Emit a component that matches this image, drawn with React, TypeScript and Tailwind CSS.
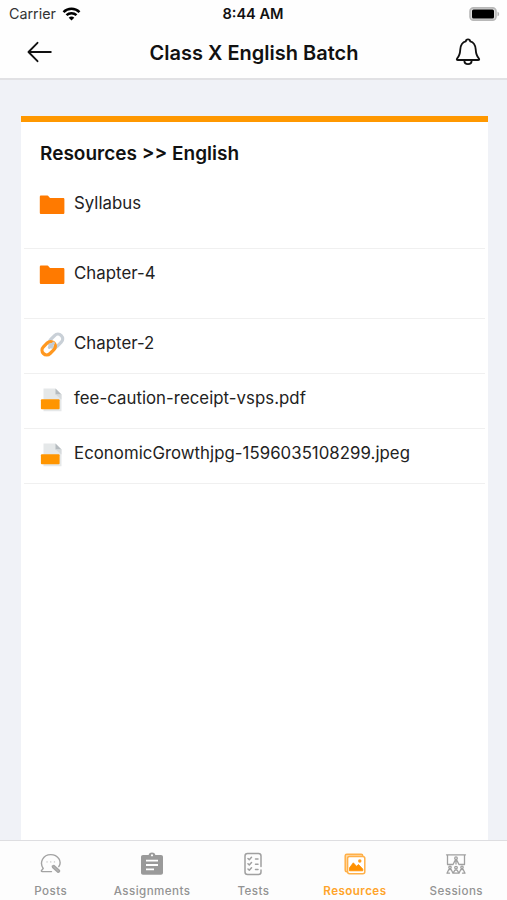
import type { ReactNode } from 'react'

type ResourceType = 'folder' | 'link' | 'file'

const resources: { name: string; type: ResourceType }[] = [
  { name: 'Syllabus', type: 'folder' },
  { name: 'Chapter-4', type: 'folder' },
  { name: 'Chapter-2', type: 'link' },
  { name: 'fee-caution-receipt-vsps.pdf', type: 'file' },
  { name: 'EconomicGrowthjpg-1596035108299.jpeg', type: 'file' },
]

function WifiIcon() {
  return (
    <svg width="19" height="14" viewBox="0 0 18 14" fill="none" stroke="#000" strokeWidth="2.5">
      <path d="M1 5.1C5.4.7 12.6.7 17 5.1" />
      <path d="M4 8.2c2.8-2.7 7.2-2.7 10 0" />
      <path d="M9 13.6 6.2 10.7c1.6-1.5 4-1.5 5.6 0z" fill="#000" stroke="none" />
    </svg>
  )
}

function BatteryIcon() {
  return (
    <svg width="31" height="14" viewBox="0 0 31 14">
      <rect x="1" y=".9" width="26" height="12.2" rx="3.4" fill="#ddd" stroke="#b8b8b8" strokeWidth="1.6" />
      <rect x="3" y="2.6" width="22" height="8.8" rx="1.5" fill="#000" />
      <path d="M28.5 4.7c2.2.7 2.2 3.9 0 4.6z" fill="#b5b5b5" />
    </svg>
  )
}

function BackIcon() {
  return (
    <svg width="26" height="22" viewBox="0 0 26 22" fill="none" stroke="#111" strokeWidth="1.9" strokeLinecap="round" strokeLinejoin="round">
      <path d="M11.5 1.8 2.5 11l9 9.2M2.8 11h22" />
    </svg>
  )
}

function BellIcon() {
  return (
    <svg width="26" height="28" viewBox="0 0 26 28" fill="none" stroke="#111" strokeWidth="1.8" strokeLinecap="round" strokeLinejoin="round">
      <path d="M10.8 3.4c.2-2.7 4.2-2.7 4.4 0 3.6.9 5.2 3.8 5.5 8 .3 5.4 1.2 7 3.1 8.9.8 1 .5 1.7-.8 1.7H3c-1.3 0-1.6-.7-.8-1.7 1.9-1.9 2.8-3.5 3.1-8.9.3-4.2 1.9-7.1 5.5-8z" />
      <path d="M9.3 22.4c.2 5 7.2 5 7.4 0" />
    </svg>
  )
}

function FolderIcon() {
  return (
    <svg width="26" height="20" viewBox="0 0 26 20" fill="#ff7a00">
      <path d="M2.2.6h6.2c.5 0 .8.2 1.100.6L11 3h13c.9 0 1.400.5 1.400 1.400v13.300c0 .9-.5 1.400-1.400 1.400H2.200c-.9 0-1.400-.5-1.400-1.400V2C.8 1.100 1.300.6 2.200.6z" />
    </svg>
  )
}

function LinkIcon() {
  return (
    <svg width="25" height="25" viewBox="0 0 26 26" fill="none" strokeWidth="3.4">
      <rect x="8.8" y="4.1" width="15.5" height="9.8" rx="4.9" transform="rotate(-45 16.8 9)" stroke="#c9d0d7" />
      <rect x="1.3" y="12" width="15.5" height="9.8" rx="4.9" transform="rotate(-45 9 16.9)" stroke="#ff9820" />
      <path d="m9.7 16 4.3-4.3" stroke="#c3ccd5" strokeWidth="3.2" strokeLinecap="round" />
    </svg>
  )
}

function FileIcon() {
  return (
    <svg width="24" height="26" viewBox="0 0 24 26">
      <path d="M3.5 1.5h12l6 6v16.8h-18z" fill="#e5e8e9" />
      <path d="M15.5 1.5v6h6z" fill="#b5bbbf" />
      <path d="m15.5 7.5 6 5v-5z" fill="#d6dadc" />
      <rect x=".9" y="12.3" width="18.7" height="9.9" rx="1" fill="#ff9500" />
    </svg>
  )
}

function PostsIcon() {
  return (
    <svg width="22" height="22" viewBox="0 0 22 22" fill="none" stroke="#a3a3a3" strokeWidth="1.4" strokeLinecap="round" strokeLinejoin="round">
      <path d="M11.5 18.6H2.2c-.9 0-1.1-.8-.5-1.4l1.5-1.7C-1 9.3 3.2 1.6 10.7 1.6c7.4 0 11.6 7 8.1 12" />
      <path d="M7 8.9h.1M10.7 8.9h.1M14.4 8.9h.1" stroke="#c4c4c4" />
      <path d="m12.3 13.2 1.7-.8 5.3 4.8c1 1-.6 2.7-1.7 1.7l-5-4.5z" fill="#b7b7b7" />
    </svg>
  )
}

function AssignmentsIcon() {
  return (
    <svg width="24" height="24" viewBox="0 0 24 24" fill="#9a9a9a">
      <path d="M3 3h5.600C9.200-.3 14.800-.3 15.400 3H21c1.200 0 2 .8 2 2v15.800c0 1.200-.8 2-2 2H3c-1.200 0-2-.8-2-2V5c0-1.200.8-2 2-2z" />
      <circle cx="12" cy="3.3" r="1.1" fill="#fff" />
      <path d="M6 8.600h12M6 13h12M6 17.400h8" stroke="#fff" strokeWidth="1.9" />
    </svg>
  )
}

function TestsIcon() {
  return (
    <svg width="20" height="24" viewBox="0 0 20 24" fill="none" stroke="#a0a0a0" strokeWidth="1.5" strokeLinecap="round" strokeLinejoin="round">
      <path d="M18 14.5V4c0-1.500-1-2.500-2.500-2.500h-11C3 1.500 2 2.500 2 4v16c0 1.500 1 2.500 2.500 2.500h11c1.500 0 2.500-1 2.500-2.500v-2" />
      <path d="m5 6.500 1.300 1.200 2.200-2.400M5 11.700l1.300 1.200 2.200-2.400M5 17l1.300 1.200 2.200-2.400M12.500 7h2.500M12.500 12.200h2.500M12.500 17.500h2.500" />
    </svg>
  )
}

function ResourcesIcon() {
  return (
    <svg width="22" height="22" viewBox="0 0 22 22" fill="none" stroke="#ffb048" strokeWidth="1.5" strokeLinejoin="round">
      <rect x="1.2" y="1.2" width="17.5" height="17.5" rx="1.5" fill="#ffd9a5" />
      <rect x="3.6" y="3.6" width="17.2" height="17.2" rx="2" fill="#fff" />
      <path d="M5.500 17.800v-3l3.800-5 3.200 3.500 2-1.800 4.300 4.600v1.700z" fill="#ff9000" stroke="#ff9000" strokeWidth=".8" />
      <circle cx="15.8" cy="8" r="1.7" fill="#ff9d1c" stroke="none" />
    </svg>
  )
}

function SessionsIcon() {
  return (
    <svg width="22" height="22" viewBox="0 0 22 22" fill="none" stroke="#a0a0a0" strokeWidth="1.3" strokeLinecap="round" strokeLinejoin="round">
      <path d="M1.500 1.800h19M2.500 2v9.500h5M19.500 2v9.500h-5" />
      <circle cx="11" cy="5.2" r="1.3" />
      <path d="M8 11.500 10 7.600h2l2 3.900M11 8v3" />
      <circle cx="5" cy="14.3" r="1.2" />
      <circle cx="11" cy="14.6" r="1.3" />
      <circle cx="17" cy="14.3" r="1.2" />
      <path d="M2 20.200 3.800 16.500h2.400L8 20.200 10 17h2l2 3.200 1.800-3.700h2.400l1.800 3.700M2 20.200h2.500M8 20.200h6M17.500 20.200H20" />
    </svg>
  )
}

const icons: Record<ResourceType, ReactNode> = {
  folder: <FolderIcon />,
  link: <LinkIcon />,
  file: <FileIcon />,
}

const tabs = [
  { label: 'Posts', icon: <PostsIcon /> },
  { label: 'Assignments', icon: <AssignmentsIcon /> },
  { label: 'Tests', icon: <TestsIcon /> },
  { label: 'Resources', icon: <ResourcesIcon />, active: true },
  { label: 'Sessions', icon: <SessionsIcon /> },
]

export default function App() {
  return (
    <div className="flex h-[900px] w-[507px] flex-col overflow-hidden bg-[#f0f2f7] font-['Inter',sans-serif] text-[#111]">
      <header className="h-20 shrink-0 border-b-2 border-[#e1e1e4] bg-[#fefefe]">
        <div className="grid h-[27px] grid-cols-3 items-center pr-[7px] pl-[9px] text-[14.3px]">
          <div className="flex items-center gap-1.5">
            <span className="pt-px text-[#333]">Carrier</span>
            <WifiIcon />
          </div>
          <span className="pt-[3px] pr-[3px] text-center text-[14.6px] font-semibold">8:44 AM</span>
          <div className="flex justify-end">
            <BatteryIcon />
          </div>
        </div>
        <div className="grid h-[50px] grid-cols-[60px_1fr_60px] items-center px-[26px]">
          <BackIcon />
          <h1 className="pt-[2px] pl-px text-center text-[20px] font-semibold whitespace-nowrap">
            Class X English Batch
          </h1>
          <div className="flex justify-end">
            <BellIcon />
          </div>
        </div>
      </header>

      <main className="flex min-h-0 flex-1 flex-col pt-9 pr-[19px] pl-[20.5px]">
        <section className="flex-1 border-t-[6px] border-[#ff9800] bg-white px-[3px]">
          <h2 className="flex h-[57px] items-center pt-[7px] pl-[16.5px] text-[19px] font-semibold">
            Resources &gt;&gt; English
          </h2>
          <ul>
            {resources.map((item) => (
              <li
                key={item.name}
                className={`flex items-start border-b border-[#f0f0f0] pl-[15px] ${item.type === 'folder' ? 'h-[70px]' : 'h-[55px]'}`}
              >
                <div className="flex h-[51px] w-[27px] items-center justify-center">{icons[item.type]}</div>
                <span
                  className={`ml-[8.5px] text-[16.8px] tracking-[0.04px] text-[#222] ${item.type === 'folder' ? 'leading-[49px]' : 'leading-[48px]'}`}
                >
                  {item.name}
                </span>
              </li>
            ))}
          </ul>
        </section>
      </main>

      <nav className="grid h-[60px] shrink-0 grid-cols-5 border-t border-[#dedee1] bg-[#fdfdfd]">
        {tabs.map((tab) => (
          <div
            key={tab.label}
            className={`flex flex-col items-center pt-[11px] text-[11.6px] tracking-[0.45px] ${tab.active ? 'font-semibold text-[#ffa42b]' : 'font-medium text-[#939393]'}`}
          >
            <div className="flex h-6 items-center">{tab.icon}</div>
            <span className="mt-[7px] leading-4">{tab.label}</span>
          </div>
        ))}
      </nav>
    </div>
  )
}
